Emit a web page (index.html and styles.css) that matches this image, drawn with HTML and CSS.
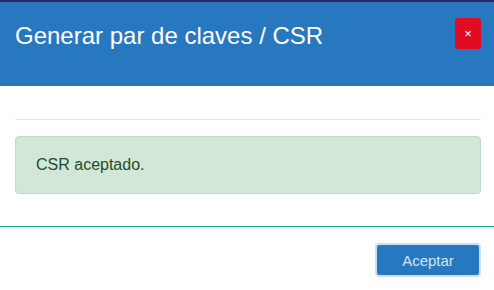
FILE: index.html
```html
<!DOCTYPE html>
<html lang="es">
<head>
  <meta charset="UTF-8">
  <meta name="viewport" content="width=device-width, initial-scale=1.0">
  <title>Generar par de claves / CSR</title>
  <link rel="stylesheet" href="styles.css">
</head>
<body>
  <div class="modal">
    <div class="modal-header">
      <h4 class="modal-title">Generar par de claves / CSR</h4>
      <button class="close" type="button">&times;</button>
    </div>
    <div class="modal-body">
      <hr>
      <div class="alert alert-success">CSR aceptado.</div>
    </div>
    <div class="modal-footer">
      <button class="btn btn-primary" type="button">Aceptar</button>
    </div>
  </div>
</body>
</html>
```

FILE: styles.css
```css
html, body {
  margin: 0;
  padding: 0;
  overflow: hidden;
  background-color: white;
}

body {
  font-family: "Liberation Sans", Arial, sans-serif;
}

.modal {
  width: 496px;
  background-color: white;
}

.modal-header {
  display: flex;
  justify-content: space-between;
  align-items: flex-start;
  height: 68px;
  padding: 16px 15px 0 15px;
  background-color: #2878c0;
  border-top: 2px solid #2c2a66;
}

.modal-title {
  margin: 0;
  font-size: 24px;
  font-weight: normal;
  line-height: 36px;
  color: white;
}

.close {
  width: 26px;
  height: 31px;
  padding: 0;
  border: none;
  border-radius: 3px;
  background-color: #e00c24;
  color: white;
  font-family: "Liberation Sans", Arial, sans-serif;
  font-size: 13px;
  line-height: 31px;
  cursor: pointer;
}

.modal-body {
  padding: 15px 15px 0 15px;
}

.modal-body hr {
  margin: 18px 0 16px 0;
  border: 0;
  border-top: 1px solid #e5e5e5;
}

.alert {
  padding: 15px 20px;
  margin-bottom: 32px;
  border: 1px solid #bcdec6;
  border-radius: 4px;
  font-size: 16px;
  line-height: 26px;
}

.alert-success {
  background-color: #d2e7d7;
  color: #1e4d2b;
}

.modal-footer {
  display: flex;
  justify-content: flex-end;
  padding: 16px 15px 15px 15px;
  border-top: 1px solid #1aab8b;
}

.btn {
  width: 106px;
  height: 34px;
  border-radius: 4px;
  font-family: "Liberation Sans", Arial, sans-serif;
  font-size: 15px;
  cursor: pointer;
}

.btn-primary {
  background-color: #2878c0;
  border: 2px solid #cde0f2;
  color: #d3e5f5;
}
```
